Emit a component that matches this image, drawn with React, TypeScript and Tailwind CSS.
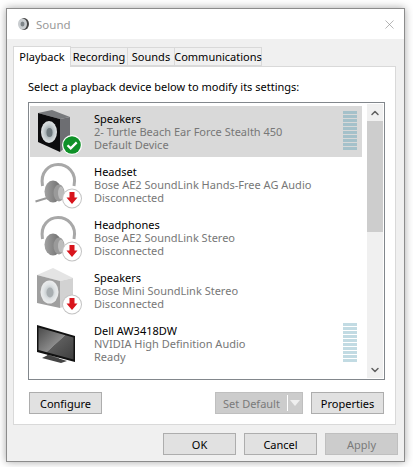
import React from 'react';
import { X, ChevronUp, ChevronDown } from 'lucide-react';

function Badge({ kind }: { kind: 'ok' | 'down' }) {
  if (kind === 'ok') {
    return (
      <g>
        <circle cx="38" cy="39" r="10" fill="#fff" />
        <circle cx="38" cy="39" r="8.800" fill="#0f9128" />
        <path d="M33.500 39.200l3.200 3.200 6-6" fill="none" stroke="#fff" strokeWidth="2.200" />
      </g>
    );
  }
  return (
    <g>
      <circle cx="38" cy="39.500" r="10" fill="#c4c4c4" />
      <circle cx="38" cy="39.500" r="9" fill="#fff" />
      <path d="M35.500 33h5v5.500h3L38 45l-5.500-6.500h3z" fill="#d8141c" />
    </g>
  );
}

function SpeakerIcon({ dim, badge }: { dim?: boolean; badge: 'ok' | 'down' }) {
  const id = dim ? 'spkDim' : 'spkOn';
  return (
    <svg width="48" height="51" viewBox="0 0 48 51" className="shrink-0">
      <defs>
        <radialGradient id={id} cx="50%" cy="50%" r="55%">
          <stop offset="0%" stopColor={dim ? '#b0b6b9' : '#7f8a8f'} />
          <stop offset="60%" stopColor={dim ? '#dfe3e5' : '#c5cdd0'} />
          <stop offset="100%" stopColor={dim ? '#f0f0f0' : '#e8eaeb'} />
        </radialGradient>
      </defs>
      {dim ? (
        <>
          <path d="M3 10l16-7 20 10-13 3z" fill="#e4e4e4" />
          <path d="M26 16l13-3v26l-13 4z" fill="#d2d2d2" />
          <path d="M3 10l23 6v27L3 38z" fill="#9f9f9f" />
          <ellipse cx="15.500" cy="27" rx="9" ry="11.500" fill={`url(#${id})`} />
          <ellipse cx="16" cy="27.500" rx="3.500" ry="5" fill="#a8aeb1" />
        </>
      ) : (
        <>
          <path d="M4 7l14-3 18 7-10 2z" fill="#77797c" />
          <path d="M26 13l10-2v26l-10 9z" fill="#6d6e72" />
          <path d="M4 7l22 6v33L4 36z" fill="#0c0c0e" />
          <ellipse cx="15" cy="26" rx="8" ry="11" fill={`url(#${id})`} />
          <ellipse cx="15.500" cy="26.500" rx="3" ry="4.500" fill="#6f7a7f" />
        </>
      )}
      <Badge kind={badge} />
    </svg>
  );
}

function HeadsetIcon({ mic }: { mic?: boolean }) {
  const id = mic ? 'cupMic' : 'cupPlain';
  return (
    <svg width="48" height="51" viewBox="0 0 48 51" className="shrink-0">
      <defs>
        <linearGradient id={id} x1="0" y1="0" x2="1" y2="0">
          <stop offset="0%" stopColor="#a2a2a2" />
          <stop offset="100%" stopColor="#6a6a6a" />
        </linearGradient>
      </defs>
      <path d="M8.500 27C6 13 15 5.500 24 5.500S43 13 40 27" fill="none" stroke="#a8a8a8" strokeWidth="3" />
      <ellipse cx="19" cy="32.500" rx="8.500" ry="11" fill={`url(#${id})`} />
      <ellipse cx="25" cy="34" rx="5.500" ry="8.500" fill="#9a9a9a" />
      <ellipse cx="27" cy="34" rx="3" ry="6.500" fill="#bdbdbd" />
      {mic && <path d="M1.500 42.500L13 39" stroke="#9a9a9a" strokeWidth="2" />}
      <Badge kind="down" />
    </svg>
  );
}

function MonitorIcon() {
  return (
    <svg width="48" height="51" viewBox="0 0 48 51" className="shrink-0">
      <defs>
        <linearGradient id="screenFill" x1="0" y1="0" x2="1" y2="1">
          <stop offset="0%" stopColor="#4a4a4a" />
          <stop offset="50%" stopColor="#8c8c8c" />
          <stop offset="51%" stopColor="#5c5c5c" />
          <stop offset="100%" stopColor="#3e3e3e" />
        </linearGradient>
      </defs>
      <path d="M13 36l12 4v3l-12-3z" fill="#888" />
      <path d="M8 40l6-3 19 6-6 2z" fill="#444" />
      <path d="M3 7l38 11v26L3 34z" fill="#111" />
      <path d="M4.500 9.500l35 10v22L4.500 32z" fill="url(#screenFill)" />
    </svg>
  );
}

function Meter({ color }: { color: string }) {
  return (
    <div className="mb-[2px] flex w-[14px] flex-col gap-[1px]">
      {Array.from({ length: 10 }).map((_, i) => (
        <div key={i} className={`h-[3px] w-full ${color}`} />
      ))}
    </div>
  );
}

const devices = [
  { name: 'Speakers', sub: '2- Turtle Beach Ear Force Stealth 450', status: 'Default Device', icon: <SpeakerIcon badge="ok" />, meter: 'bg-[#a5c1ca]', selected: true },
  { name: 'Headset', sub: 'Bose AE2 SoundLink Hands-Free AG Audio', status: 'Disconnected', icon: <HeadsetIcon mic /> },
  { name: 'Headphones', sub: 'Bose AE2 SoundLink Stereo', status: 'Disconnected', icon: <HeadsetIcon /> },
  { name: 'Speakers', sub: 'Bose Mini SoundLink Stereo', status: 'Disconnected', icon: <SpeakerIcon dim badge="down" /> },
  { name: 'Dell AW3418DW', sub: 'NVIDIA High Definition Audio', status: 'Ready', icon: <MonitorIcon />, meter: 'bg-[#c2dbe3]' },
];

const btn = 'flex h-[22px] w-[73px] items-center justify-center border border-[#adadad] bg-[#e1e1e1] text-black';

export default function App() {
  return (
    <div className="h-[467px] w-[413px] overflow-hidden bg-white pl-[6px] pt-[8px] font-['Noto_Sans',sans-serif] text-[11px] leading-[13px]">
      <div className="flex h-[454px] w-[399px] flex-col border border-[#8c8c8c] bg-[#f0f0f0] shadow-[0_0_8px_rgba(0,0,0,0.35)]">
        {/* Title bar */}
        <div className="flex h-[30px] items-center bg-white pl-[9px] pr-[7px] text-[11.5px] text-[#999]">
          <svg width="14" height="14" viewBox="0 0 14 14">
            <ellipse cx="8" cy="7" rx="5" ry="6" fill="#444" />
            <ellipse cx="6.500" cy="7" rx="4.500" ry="5.500" fill="#c9cdd0" />
            <ellipse cx="6.500" cy="7" rx="2" ry="2.500" fill="#7d8488" />
          </svg>
          <span className="ml-[6px] flex-1">Sound</span>
          <X size={15} strokeWidth={1} className="text-[#8a8a8a]" />
        </div>

        {/* Tabs */}
        <div className="mt-[6px] flex h-[21px] items-end pl-[6px] text-black">
          <div className="z-10 -mb-px flex h-[21px] w-[58px] items-start justify-center border border-b-0 border-[#d9d9d9] bg-white pt-[3px]">Playback</div>
          <div className="flex h-[19px] w-[57px] items-center justify-center border border-l-0 border-[#d9d9d9] bg-[#f0f0f0]">Recording</div>
          <div className="flex h-[19px] w-[47px] items-center justify-center border border-l-0 border-[#d9d9d9] bg-[#f0f0f0]">Sounds</div>
          <div className="flex h-[19px] w-[87px] items-center justify-center border border-l-0 border-[#d9d9d9] bg-[#f0f0f0]">Communications</div>
        </div>

        {/* Tab panel */}
        <div className="ml-[6px] flex h-[359px] w-[383px] flex-col border border-[#d9d9d9] bg-white pl-[14px] pr-[11px]">
          <p className="mt-[13px] text-black">Select a playback device below to modify its settings:</p>

          <div className="mt-[9px] flex h-[278px] w-[357px] border border-[#82878c] py-[3px] pl-[1px] pr-[1px]">
            <div className="flex flex-1 flex-col gap-[2px] overflow-hidden">
              {devices.map((d, i) => (
                <div key={i} className={`flex h-[51px] shrink-0 items-center pl-[4px] pr-[5px] ${d.selected ? 'bg-[#d9d9d9]' : ''}`}>
                  {d.icon}
                  <div className="ml-[12px] flex flex-1 flex-col">
                    <span className="text-black">{d.name}</span>
                    <span className="text-[#777]">{d.sub}</span>
                    <span className="text-[#777]">{d.status}</span>
                  </div>
                  {d.meter && <Meter color={d.meter} />}
                </div>
              ))}
            </div>
            {/* Scrollbar */}
            <div className="-my-[2px] ml-[5px] flex w-[16px] flex-col bg-[#f0f0f0]">
              <div className="flex h-[17px] items-center justify-center">
                <ChevronUp size={12} strokeWidth={3} className="text-[#606060]" />
              </div>
              <div className="h-[111px] bg-[#cdcdcd]" />
              <div className="mt-auto flex h-[17px] items-center justify-center">
                <ChevronDown size={12} strokeWidth={3} className="text-[#606060]" />
              </div>
            </div>
          </div>

          <div className="mt-[12px] flex items-center pl-[1px]">
            <div className={btn}>Configure</div>
            <div className="ml-auto flex h-[22px] w-[88px] items-center border border-[#bfbfbf] bg-[#cccccc] text-[#7a7a7a]">
              <span className="flex-1 text-center">Set Default</span>
              <span className="h-[16px] w-px bg-white" />
              <svg width="14" height="8" viewBox="0 0 14 8"><path d="M2 1h10L7 7z" fill="#efefef" /></svg>
            </div>
            <div className={`${btn} ml-[8px]`}>Properties</div>
          </div>
        </div>

        {/* Dialog buttons */}
        <div className="mt-[8px] flex justify-end gap-[8px] pr-[6px]">
          <div className={btn}>OK</div>
          <div className={btn}>Cancel</div>
          <div className="flex h-[22px] w-[73px] items-center justify-center border border-[#bfbfbf] bg-[#cccccc] text-[#7a7a7a]">Apply</div>
        </div>
      </div>
    </div>
  );
}
